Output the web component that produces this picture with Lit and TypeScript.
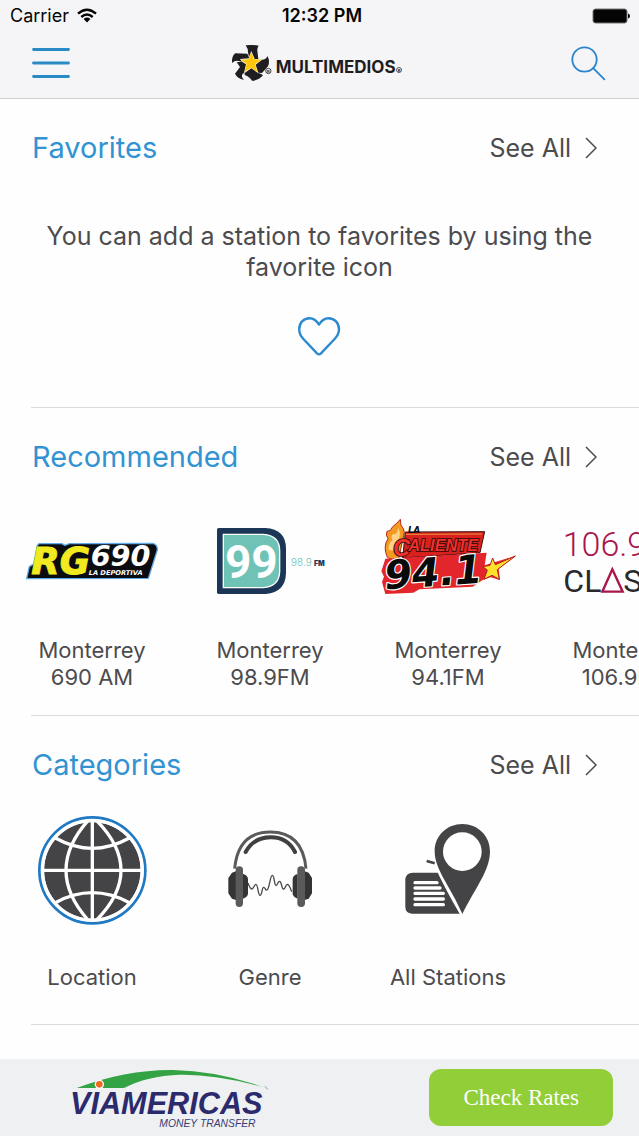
import { LitElement, html, css, svg } from "lit";
import { customElement, property } from "lit/decorators.js";

const multimediosLogo = svg`
  <svg class="brand" viewBox="33 24 537 120" role="img" aria-label="Multimedios">
    <g fill="#1f1d1f">
      <path d="M77 31 Q96 28 116 32 Q111 38 112 48 L115 72 L104 72 L94 48 L87 66 L84 52 Q84 40 77 31Z"/>
      <path d="M36 84 Q35 62 46 55 L82 56 L88 70 L60 72 L66 80 L56 78 Q44 76 36 84Z"/>
      <path d="M50 82 L66 80 L78 88 L72 114 L80 110 L68 116 Q62 124 72 135 Q52 130 45 116 L60 96Z"/>
      <path d="M74 114 L94 100 L114 114 L122 116 L129 121 Q116 137 96 137 Q90 126 74 120Z"/>
      <path d="M108 72 L128 74 Q140 72 142 63 Q151 78 144 94 L126 114 L115 113 L107 89 L126 74Z"/>
    </g>
    <path fill="#fdc70c" d="M94 50 L101 72 L125 74 L105 88 L113 112 L93 98 L73 111 L80 87 L62 74 L85 73Z"/>
    <circle cx="145" cy="108" r="8" fill="#f5f4f6" stroke="#1f1d1f" stroke-width="2.4"/>
    <text class="mark" x="141" y="113">R</text>
    <text class="brand-name" x="167" y="113">MULTIMEDIOS</text>
    <circle cx="537" cy="105" r="7.5" fill="none" stroke="#1f1d1f" stroke-width="2.2"/>
    <text class="mark" x="533" y="110">R</text>
  </svg>`;

const rgLogo = svg`
  <svg class="station-logo" viewBox="66 48 420 252" role="img" aria-label="RG 690 La Deportiva">
    <path d="M117 131 L185 131 L195 136 L208 131 L458 130 Q473 134 472 150 L445 235 L80 236 L88 200 L101 192 L112 136Z" fill="#0b0c10" stroke="#5ea9e6" stroke-width="4" stroke-linejoin="round"/>
    <text class="rg" x="94" y="222">RG</text>
    <text class="rg-number" x="272" y="199">690</text>
    <text class="rg-tag" x="266" y="225">LA DEPORTIVA</text>
  </svg>`;

const ninetyNineLogo = svg`
  <svg class="station-logo" viewBox="600 48 420 252" role="img" aria-label="D99 98.9 FM">
    <path d="M656 84 H796 Q858 88 858 146 V220 Q856 277 798 282 H656 Q651 282 651 277 V89 Q651 84 656 84Z" fill="#1c3658"/>
    <path d="M670 103 H790 Q839 106 839 152 V214 Q838 260 790 263 H670Z" fill="#6fc3b6" stroke="#fff" stroke-width="4"/>
    <text class="nn" x="754" y="235" text-anchor="middle">99</text>
    <text class="nn-freq" x="873" y="198">98.9</text>
    <text class="nn-fm" x="942" y="198">FM</text>
  </svg>`;

const calienteLogo = svg`
  <svg class="station-logo" viewBox="54 48 420 252" role="img" aria-label="La Caliente 94.1">
    <path d="M82 172 Q68 140 84 116 Q76 106 81 94 Q92 96 98 80 Q108 74 121 58 Q120 78 130 86 Q136 96 130 112 L116 176 L98 180Z" fill="#f39a22" stroke="#b5281c" stroke-width="3"/>
    <path d="M86 150 Q84 130 98 120 Q90 108 100 102 Q112 106 114 84 Q124 96 116 118 L108 152Z" fill="#ffd48a"/>
    <path d="M136 96 L374 95 L360 158 L128 174Z" fill="#d9201d" stroke="#3b1210" stroke-width="3"/>
    <path d="M138 103 L366 102" stroke="#f6d54a" stroke-width="2"/>
    <text class="cal-la" x="144" y="100">LA</text>
    <text class="cal-c" x="99" y="169">C</text>
    <text class="cal-name" x="145" y="152">ALIENTE</text>
    <path d="M76 176 L380 158 L374 196 L468 167 L416 206 L420 240 L392 232 L368 240 L338 260 L178 268 L160 278 L76 282 L66 246 L72 230 L64 214Z" fill="#e3262b"/>
    <text class="cal-dial" x="76" y="268" transform="rotate(-4 76 268)">94.1</text>
    <path d="M398 174 L406 194 L466 168 L412 209 L418 238 L396 226 L372 238 L382 210 L368 200 L390 196Z" fill="#fbe32c" stroke="#b51f1f" stroke-width="3"/>
  </svg>`;

const clasicaLogo = svg`
  <svg class="station-logo" viewBox="588 48 420 252" role="img" aria-label="106.9 Clásica">
    <text class="cl-freq" x="608" y="168">106.9</text>
    <text class="cl-name" x="610" y="277">CL</text>
    <path d="M757 208 L788 275 H727Z" fill="none" stroke="#a8164c" stroke-width="7"/>
    <text class="cl-name" x="790" y="277">S</text>
  </svg>`;

const globeIcon = svg`
  <svg class="category-icon" viewBox="36 30 360 360" aria-hidden="true">
    <circle cx="217" cy="211" r="159" fill="#fff" stroke="#2079c3" stroke-width="8"/>
    <circle cx="217" cy="211" r="145" fill="#444345"/>
    <g fill="none" stroke="#fff" stroke-width="10">
      <path d="M217 62 V360 M68 211 H366"/>
      <path d="M204 62 Q138 136 138 211 Q138 286 204 360"/>
      <path d="M230 62 Q303 136 303 211 Q303 286 230 360"/>
      <path d="M106 114 Q217 176 328 114"/>
      <path d="M106 308 Q217 248 328 308"/>
    </g>
    <circle cx="217" cy="211" r="149" fill="none" stroke="#fff" stroke-width="9"/>
  </svg>`;

const headphonesIcon = svg`
  <svg class="category-icon" viewBox="0 0 360 360" aria-hidden="true">
    <path d="M74 176 Q84 66 181 66 T288 176" fill="none" stroke="#5a5a5b" stroke-width="9"/>
    <path d="M107 126 Q130 83 181 82 T255 126" fill="none" stroke="#403f41" stroke-width="12" stroke-linecap="round"/>
    <path d="M78 184 L66 188 L55 204 V250 L66 266 L78 270Z M284 184 L296 188 L306 204 V250 L296 266 L284 270Z" fill="#343335"/>
    <path d="M99 192 Q114 196 114 208 V252 Q112 262 99 266Z M263 192 Q248 196 248 208 V252 Q250 262 263 266Z" fill="#343335"/>
    <rect x="77" y="169" width="22" height="122" rx="11" fill="#5a5a5b"/>
    <rect x="262" y="169" width="23" height="122" rx="11" fill="#5a5a5b"/>
    <path d="M114 219 Q120 236 125 237 C132 237 132 223 138 223 C144 223 144 256 150 256 C157 256 155 232 161 232 C166 232 166 242 171 240 C179 236 180 196 187 196 C194 196 192 226 198 226 C203 226 203 213 209 214 C216 215 214 238 221 237 C227 236 226 222 233 223 C240 225 240 238 246 245" fill="none" stroke="#4a494b" stroke-width="4"/>
  </svg>`;

const stationsIcon = svg`
  <svg class="category-icon" viewBox="-6 0 360 360" aria-hidden="true">
    <path d="M110 153 L134 160" stroke="#444345" stroke-width="8"/>
    <path d="M68 188 H145 L210 311 H66 Q46 309 46 290 V208 Q48 189 68 188Z" fill="#444345"/>
    <path d="M75 218 H141 M75 234 H150 M75 250 H160 M75 267 H160 M75 284 H160" stroke="#fff" stroke-width="10" stroke-linecap="round"/>
    <path d="M217 42 C262 42 300 76 300 124 C300 182 258 230 217 312 C182 230 134 180 134 124 C134 76 172 42 217 42Z" fill="#444345"/>
    <path d="M136 165 Q168 236 213 312" fill="none" stroke="#fff" stroke-width="6"/>
    <circle cx="217" cy="125" r="58" fill="#fff"/>
  </svg>`;

const viamericasLogo = svg`
  <svg class="sponsor" viewBox="54 60 606 192" role="img" aria-label="Viamericas Money Transfer">
    <path d="M80 126 Q230 70 370 72 Q500 74 642 124 Q500 84 390 86 Q290 90 222 126Z" fill="#34a343"/>
    <circle cx="148" cy="115" r="14" fill="#fff"/>
    <circle cx="148" cy="115" r="10" fill="#f26a21"/>
    <path d="M645 121 L653 130" stroke="#8a93a8" stroke-width="3"/>
    <text class="sponsor-name" x="60" y="204">VIAMERICAS</text>
    <text class="sponsor-tag" x="328" y="243">MONEY TRANSFER</text>
  </svg>`;

const stations = [
  { city: "Monterrey", dial: "690 AM", logo: rgLogo },
  { city: "Monterrey", dial: "98.9FM", logo: ninetyNineLogo },
  { city: "Monterrey", dial: "94.1FM", logo: calienteLogo },
  { city: "Monterrey", dial: "106.9FM", logo: clasicaLogo },
];

const categories = [
  { label: "Location", icon: globeIcon },
  { label: "Genre", icon: headphonesIcon },
  { label: "All Stations", icon: stationsIcon },
];

@customElement("radio-section")
class RadioSection extends LitElement {
  @property() heading = "";

  static styles = css`
    :host {
      display: block;
    }
    .head {
      display: flex;
      justify-content: space-between;
      align-items: center;
      padding: 30px 42px 0 32px;
      line-height: 38px;
    }
    h2 {
      margin: 0;
      font-size: 29px;
      font-weight: 400;
      color: #3293d3;
    }
    a {
      display: flex;
      align-items: center;
      gap: 14px;
      font-size: 25px;
      color: #4c4b4e;
      text-decoration: none;
    }
    .chevron {
      width: 12px;
      height: 22px;
    }
    .rule {
      height: 1px;
      margin: 0 0 0 31px;
      border: 0;
      background: #dcdcde;
    }
  `;

  render() {
    return html`
      <section>
        <div class="head">
          <h2>${this.heading}</h2>
          <a href="#all">See All
            <svg class="chevron" viewBox="0 0 12 22" aria-hidden="true">
              <path d="M1 1 L11 11 L1 21" fill="none" stroke="#4c4b4e" stroke-width="1.5"/>
            </svg>
          </a>
        </div>
        <slot></slot>
        <hr class="rule" />
      </section>
    `;
  }
}

@customElement("app-root")
class AppRoot extends LitElement {
  static styles = css`
    :host {
      display: flex;
      flex-direction: column;
      min-height: 100vh;
      background: #fefefe;
      color: #4c4b4e;
      font-family: Inter, Roboto, sans-serif;
    }
    header {
      background: #f5f4f6;
      border-bottom: 1px solid #cfced1;
    }
    .status {
      display: grid;
      grid-template-columns: 1fr auto 1fr;
      align-items: center;
      padding: 4px 5px 0 10px;
      font-size: 18px;
      line-height: 24px;
      color: #050505;
    }
    .carrier {
      display: flex;
      align-items: center;
      gap: 8px;
    }
    .wifi {
      width: 20px;
      height: 16px;
    }
    .time {
      font-weight: 600;
    }
    .battery {
      justify-self: end;
      width: 43px;
      height: 16px;
    }
    .bar {
      display: flex;
      align-items: center;
      justify-content: space-between;
      padding: 15px 33px 15px 32px;
    }
    .icon-button {
      display: block;
      padding: 0;
      border: 0;
      background: none;
      cursor: pointer;
    }
    .icon-button svg {
      display: block;
    }
    .menu {
      width: 38px;
      height: 32px;
    }
    .search {
      width: 35px;
      height: 35px;
    }
    .brand {
      width: 179px;
      height: 40px;
    }
    .brand-name {
      font: 700 51px Inter, sans-serif;
      fill: #1f1d1f;
    }
    .mark {
      font: 700 12px Inter, sans-serif;
      fill: #1f1d1f;
    }
    main {
      flex: 1;
    }
    .empty {
      display: flex;
      flex-direction: column;
      align-items: center;
      gap: 33px;
      padding: 54px 40px 50px;
    }
    .empty p {
      margin: 0;
      font-size: 25px;
      line-height: 31px;
      text-align: center;
    }
    .heart {
      width: 44px;
      height: 41px;
    }
    .row {
      display: flex;
      overflow: hidden;
      padding-left: 3px;
    }
    .tile {
      flex: 0 0 178px;
      display: flex;
      flex-direction: column;
      align-items: center;
      font-size: 22px;
      line-height: 27px;
      text-align: center;
      color: inherit;
      text-decoration: none;
    }
    .stations .tile {
      gap: 37px;
      padding: 40px 0 24px;
    }
    .categories .tile {
      gap: 34px;
      padding: 26px 0 33px;
    }
    .lines {
      display: flex;
      flex-direction: column;
    }
    .station-logo {
      width: 140px;
      height: 84px;
    }
    .category-icon {
      width: 120px;
      height: 120px;
    }
    .rg,
    .rg-number,
    .rg-tag {
      font-family: "DejaVu Sans", sans-serif;
      font-weight: 700;
      font-style: italic;
      fill: #fff;
    }
    .rg {
      font-size: 111px;
      fill: #f1ea20;
      stroke: #f1ea20;
      stroke-width: 3px;
    }
    .rg-number {
      font-size: 86px;
    }
    .rg-tag {
      font-size: 20px;
    }
    .nn {
      font: 700 138px Roboto, sans-serif;
      fill: #fff;
    }
    .nn-freq {
      font: 300 30px Inter, sans-serif;
      fill: #6fc3b6;
    }
    .nn-fm {
      font: 900 21px Inter, sans-serif;
      fill: #1c3658;
    }
    .cal-la {
      font: italic 700 26px "DejaVu Sans", sans-serif;
      fill: #0a0a0a;
    }
    .cal-c,
    .cal-name {
      font: italic 700 49px "Liberation Sans", sans-serif;
      fill: #f0302c;
      stroke: #1c0b08;
      stroke-width: 5px;
      paint-order: stroke;
    }
    .cal-c {
      font-size: 72px;
    }
    .cal-dial {
      font: italic 700 119px "DejaVu Sans", sans-serif;
      fill: #0a0a0a;
      stroke: #fff;
      stroke-width: 7px;
      stroke-linejoin: round;
      paint-order: stroke;
    }
    .cl-freq {
      font: 300 102px Roboto, sans-serif;
      fill: #a8164c;
    }
    .cl-name {
      font: 400 96px Roboto, sans-serif;
      fill: #28292c;
    }
    footer {
      display: flex;
      align-items: center;
      justify-content: space-between;
      padding: 10px 26px 10px 68px;
      background: #eff0f2;
    }
    .sponsor {
      width: 202px;
      height: 64px;
      margin: -4px 0;
    }
    .sponsor-name {
      font: italic 700 92px "Liberation Sans", sans-serif;
      fill: #2a2a6c;
    }
    .sponsor-tag {
      font: italic 400 31px "Liberation Sans", sans-serif;
      fill: #3b3d78;
    }
    .rates {
      padding: 15px 34px;
      border: 0;
      border-radius: 12px;
      background: #92ce38;
      color: #fff;
      font: 23px/27px "Liberation Serif", serif;
      cursor: pointer;
    }
  `;

  render() {
    return html`
      <header>
        <div class="status">
          <div class="carrier">
            <span>Carrier</span>
            <svg class="wifi" viewBox="0 0 20 16" aria-hidden="true">
              <g fill="none" stroke="#050505" stroke-width="2.4">
                <path d="M1 5.6 Q10 -2.2 19 5.6"/>
                <path d="M4.3 9 Q10 4 15.7 9"/>
              </g>
              <path d="M6.6 11 Q10 8.2 13.4 11 L10 14.6Z" fill="#050505"/>
            </svg>
          </div>
          <span class="time">12:32 PM</span>
          <svg class="battery" viewBox="0 0 43 16" role="img" aria-label="Battery full">
            <rect x="2" y="1" width="34" height="14" rx="2.5" fill="#050505" stroke="#77767a"/>
            <path d="M37 5.5 Q39 6 39 8 T37 10.5Z" fill="#050505"/>
          </svg>
        </div>
        <div class="bar">
          <button class="icon-button" aria-label="Menu">
            <svg class="menu" viewBox="0 0 38 32">
              <path d="M1.5 2.5 H36.5 M1.5 16 H36.5 M1.5 29.5 H36.5" stroke="#2a8ac6" stroke-width="2.8" stroke-linecap="round"/>
            </svg>
          </button>
          ${multimediosLogo}
          <button class="icon-button" aria-label="Search">
            <svg class="search" viewBox="0 0 35 35">
              <g fill="none" stroke="#2a86cc" stroke-width="1.8">
                <circle cx="13.5" cy="13.5" r="12.2"/>
                <path d="M22.2 22.2 L33.4 33.4" stroke-linecap="round"/>
              </g>
            </svg>
          </button>
        </div>
      </header>
      <main>
        <radio-section heading="Favorites">
          <div class="empty">
            <p>You can add a station to favorites by using the favorite icon</p>
            <svg class="heart" viewBox="0 0 44 41" aria-hidden="true">
              <path d="M21 8.6 C18.5 4.5 15 2.2 11.5 2.2 C5.5 2.2 1.2 7 1.2 13.2 C1.2 17.5 3 20.4 5.4 23 L19 37.4 Q21 39.4 23 37.4 L36.6 23 C39 20.4 41 17.5 41 13.2 C41 7 36.5 2.2 30.5 2.2 C27 2.2 23.5 4.5 21 8.6Z" fill="none" stroke="#2a8bce" stroke-width="2.4" stroke-linejoin="round"/>
            </svg>
          </div>
        </radio-section>
        <radio-section heading="Recommended">
          <div class="row stations">
            ${stations.map(
              (s) => html`
                <a class="tile" href="#station">
                  ${s.logo}
                  <span class="lines"><span>${s.city}</span><span>${s.dial}</span></span>
                </a>
              `
            )}
          </div>
        </radio-section>
        <radio-section heading="Categories">
          <div class="row categories">
            ${categories.map(
              (c) => html`
                <a class="tile" href="#category">
                  ${c.icon}
                  <span>${c.label}</span>
                </a>
              `
            )}
          </div>
        </radio-section>
      </main>
      <footer>
        ${viamericasLogo}
        <button class="rates">Check Rates</button>
      </footer>
    `;
  }
}
